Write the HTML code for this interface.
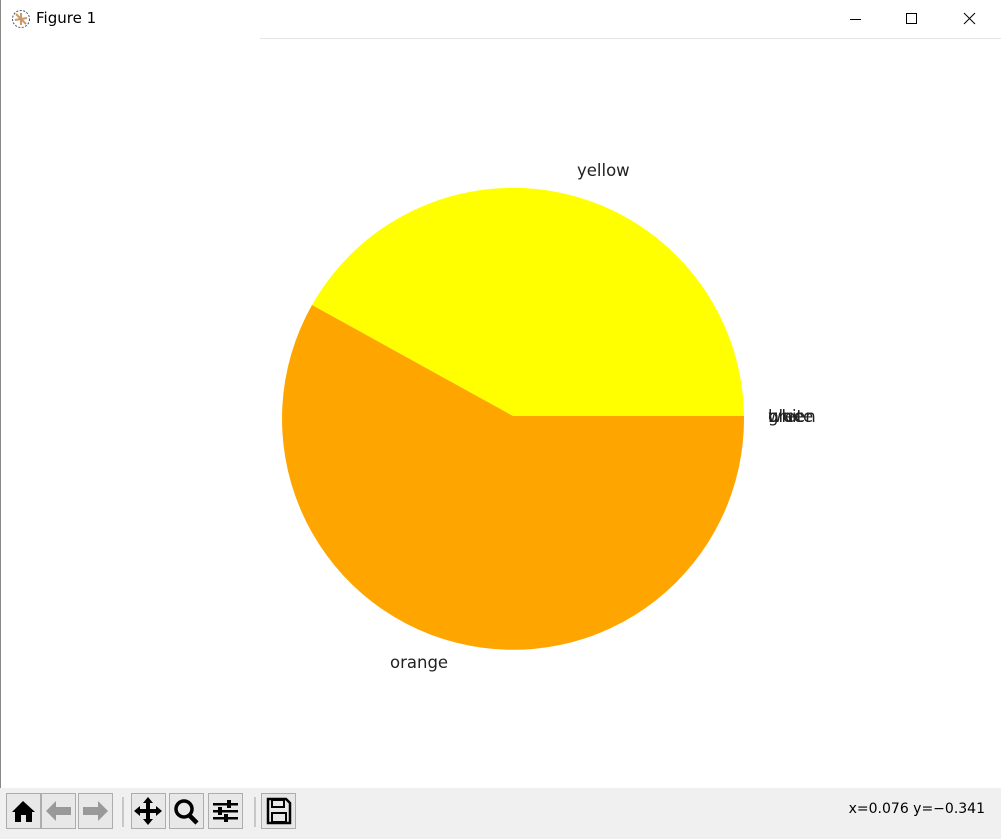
<!DOCTYPE html>
<html><head><style>
body{margin:0;width:1001px;height:839px;overflow:hidden;background:#fff;font-family:"Liberation Sans",sans-serif;position:relative}
.t{position:absolute;left:36px;top:9px;font-size:15px;color:#000;font-family:"DejaVu Sans",sans-serif}
.tb{position:absolute;left:0;top:788px;width:1001px;height:51px;background:#f0f0f0}
.b{position:absolute;top:5px;width:35px;height:36px;border:1px solid #adadad;background:#e8e8e8;box-sizing:border-box}
.sep{position:absolute;top:9px;width:2px;height:30px;background:#c8c8c8}
.c{position:absolute;right:16px;top:13px;font-size:14px;font-family:"DejaVu Sans",sans-serif;color:#000}
</style></head><body>
<div style="position:absolute;left:0;top:0;width:1px;height:839px;background:#888"></div>
<svg style="position:absolute;left:11px;top:9px" width="20" height="20"><circle cx="10" cy="10" r="8.5" fill="none" stroke="#456" stroke-dasharray="2 1.5"/><path d="M5 5 L15 15 M10 4 L10 16 M4 11 L16 9" stroke="#c96" stroke-width="2"/></svg>
<div class="t">Figure 1</div>
<svg style="position:absolute;left:840px;top:8px" width="150" height="22" stroke="#000" fill="none" stroke-width="1"><path d="M10 11.5h11"/><rect x="66.5" y="5.5" width="10" height="10"/><path d="M124 5l11 11M135 5l-11 11"/></svg>
<div style="position:absolute;left:260px;top:38px;width:741px;height:1px;background:#e5e5e5"></div>
<svg style="position:absolute;left:0;top:0" width="1001" height="788">
<path d="M513 416 L744 416 A231 231 0 0 0 312 305 Z" fill="#ffff00"/>
<path d="M513 416 L312 305 A231 231 0 1 0 744 416 Z" fill="#ffa500"/>
<g font-family="DejaVu Sans,sans-serif" font-size="16.5" fill="#222">
<text x="577" y="176">yellow</text>
<text x="390" y="668">orange</text>
<text x="768" y="422">green</text><text x="768" y="422">blue</text><text x="768" y="422">white</text>
</g></svg>
<div class="tb">
<div class="b" style="left:6px"><svg width="33" height="34"><path d="M5 18 L16 7 L28 18 L25 18 L25 28 L19 28 L19 21 L14 21 L14 28 L8 28 L8 18Z" fill="#000"/></svg></div>
<div class="b" style="left:41px"><svg width="33" height="34"><path d="M4 17 L14 7 L14 13 L29 13 L29 21 L14 21 L14 27Z" fill="#999"/></svg></div>
<div class="b" style="left:78px"><svg width="33" height="34"><path d="M29 17 L19 7 L19 13 L4 13 L4 21 L19 21 L19 27Z" fill="#999"/></svg></div>
<div class="sep" style="left:122px"></div>
<div class="b" style="left:131px"><svg width="33" height="34" fill="#000"><path d="M16 3 L21 9 L18 9 L18 15 L24 15 L24 12 L30 17 L24 22 L24 19 L18 19 L18 25 L21 25 L16 31 L11 25 L14 25 L14 19 L8 19 L8 22 L2 17 L8 12 L8 15 L14 15 L14 9 L11 9Z"/></svg></div>
<div class="b" style="left:169px"><svg width="33" height="34"><circle cx="14" cy="15" r="8" fill="none" stroke="#000" stroke-width="3.5"/><path d="M19 21 L27 29" stroke="#000" stroke-width="4.5"/></svg></div>
<div class="b" style="left:208px"><svg width="33" height="34" fill="#000"><rect x="4" y="9" width="25" height="2.5"/><rect x="4" y="16" width="25" height="2.5"/><rect x="4" y="23" width="25" height="2.5"/><rect x="18" y="6" width="4" height="8"/><rect x="9" y="13" width="4" height="8"/><rect x="15" y="20" width="4" height="8"/></svg></div>
<div class="sep" style="left:254px"></div>
<div class="b" style="left:261px"><svg width="33" height="34"><path d="M6 5 H24 L28 9 V29 H6Z" fill="none" stroke="#000" stroke-width="2.5"/><rect x="10" y="6" width="12" height="7" fill="none" stroke="#000" stroke-width="2"/><rect x="10" y="19" width="14" height="9" fill="none" stroke="#000" stroke-width="2"/></svg></div>
<div class="c">x=0.076 y=−0.341</div>
</div>
</body></html>
